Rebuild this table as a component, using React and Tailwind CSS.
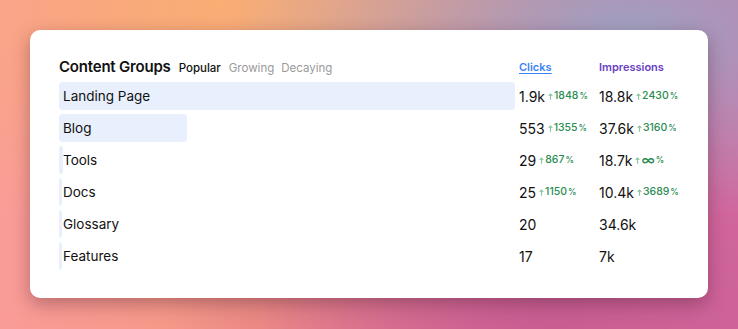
const rows = [
  { name: 'Landing Page', bar: 456, clicks: '1.9k', cg: '1848', imp: '18.8k', ig: '2430' },
  { name: 'Blog', bar: 128, clicks: '553', cg: '1355', imp: '37.6k', ig: '3160' },
  { name: 'Tools', bar: 4, clicks: '29', cg: '867', imp: '18.7k', ig: '∞' },
  { name: 'Docs', bar: 3, clicks: '25', cg: '1150', imp: '10.4k', ig: '3689' },
  { name: 'Glossary', bar: 3, clicks: '20', imp: '34.6k' },
  { name: 'Features', bar: 3, clicks: '17', imp: '7k' },
];

function Growth({ value }) {
  return (
    <span className="ml-[3px] inline-flex items-center gap-[1px] text-[10.5px] font-medium text-[#2a8c52]">
      <svg width="5" height="7" viewBox="0 0 5 7" className="text-[#8cc4a2]">
        <path d="M2.5 6.8V1M0.6 2.9L2.5 1l1.9 1.9" fill="none" stroke="currentColor" strokeWidth="1.1" />
      </svg>
      {value === '∞' ? <span className="text-[14px] leading-none">∞</span> : value}
      <span className="text-[8.5px]">%</span>
    </span>
  );
}

export default function App() {
  return (
    <div
      className="w-[738px] h-[329px] pt-[30px] px-[30px] bg-[radial-gradient(ellipse_at_85%_10%,#9fa2c2_0%,rgba(159,162,194,0)_45%),radial-gradient(ellipse_at_30%_0%,#f9ae74_0%,rgba(249,174,116,0)_55%),radial-gradient(ellipse_at_75%_100%,#c85d92_0%,rgba(200,93,146,0)_50%),linear-gradient(100deg,#fb9c9c_0%,#f59780_40%,#d76b96_75%,#d56aa4_100%)]"
      style={{ fontFamily: 'Inter, "Noto Sans", sans-serif' }}
    >
      <div className="h-[268px] rounded-[10px] bg-white pt-[26px] pl-[29px] pr-[28px] shadow-[0_6px_18px_rgba(60,20,40,0.35)]">
        <div className="flex items-center h-[22px]">
          <div className="w-[460px] shrink-0 flex items-baseline">
            <span className="text-[15px] font-semibold tracking-[-0.2px] text-[#111]">Content Groups</span>
            <span className="ml-[8px] text-[11.5px] font-medium text-[#111]">Popular</span>
            <span className="ml-[8px] text-[11.5px] text-[#9a9a9a]">Growing</span>
            <span className="ml-[7px] text-[11.5px] text-[#9a9a9a]">Decaying</span>
          </div>
          <span className="w-[80px] shrink-0 text-[11px] font-semibold text-[#3b82f6] underline underline-offset-2">Clicks</span>
          <span className="shrink-0 text-[11px] font-semibold text-[#6b3fc4]">Impressions</span>
        </div>
        <div className="mt-[4px] flex flex-col gap-[4px]">
          {rows.map((r) => (
            <div key={r.name} className="flex items-center h-[28px] text-[#111]">
              <div className="relative w-[460px] shrink-0 h-full flex items-center">
                <div className="absolute left-0 inset-y-0 rounded-[4px] bg-[#e9f0fd]" style={{ width: r.bar }} />
                <span className="relative pl-[4px] text-[13.5px]">{r.name}</span>
              </div>
              <div className="w-[80px] shrink-0 flex items-center text-[14px]">
                {r.clicks}
                {r.cg && <Growth value={r.cg} />}
              </div>
              <div className="shrink-0 flex items-center text-[14px]">
                {r.imp}
                {r.ig && <Growth value={r.ig} />}
              </div>
            </div>
          ))}
        </div>
      </div>
    </div>
  );
}
